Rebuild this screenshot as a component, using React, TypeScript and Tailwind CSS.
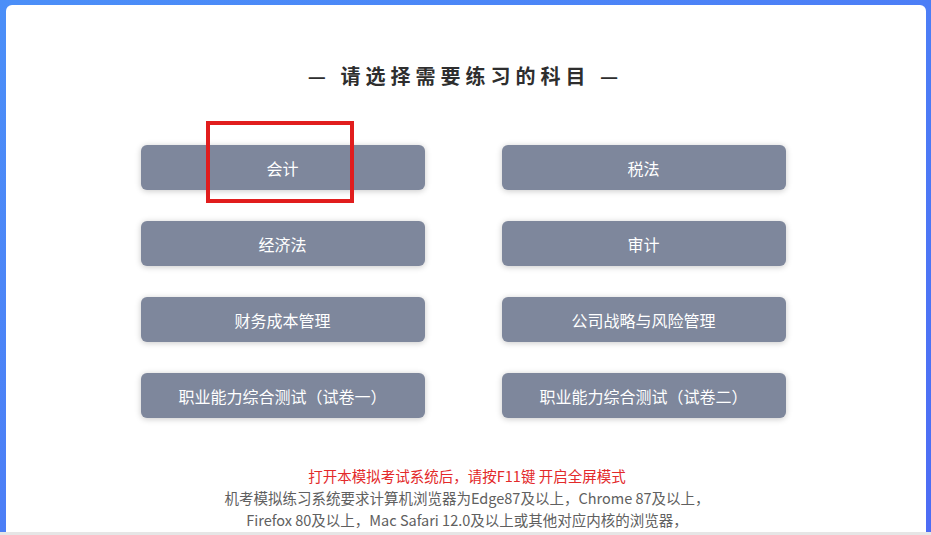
const subjects = [
  "会计",
  "税法",
  "经济法",
  "审计",
  "财务成本管理",
  "公司战略与风险管理",
  "职业能力综合测试（试卷一）",
  "职业能力综合测试（试卷二）",
];

const cjk = { fontFamily: '"Noto Sans CJK SC", "Noto Sans", sans-serif' };

function SubjectButton({ label, marked }: { label: string; marked?: boolean }) {
  return (
    <div className="relative">
      <button className="flex h-[45px] w-full items-center justify-center rounded-[6px] bg-[#7e879c] text-[16px] text-white shadow-[0_1px_6px_rgba(0,0,0,0.22)]">
        {label}
      </button>
      {marked && (
        <div className="pointer-events-none absolute left-[65px] top-[-24px] h-[82px] w-[148px] border-[4px] border-[#e11d1d]" />
      )}
    </div>
  );
}

export default function App() {
  return (
    <div
      className="flex h-[535px] w-full flex-col bg-gradient-to-br from-[#4b8ff8] to-[#4d6cf4]"
      style={cjk}
    >
      <div className="ml-[6px] mr-[5px] mt-[5px] flex flex-1 flex-col items-center rounded-t-[6px] bg-white pr-[6px] pt-[59px]">
        <h1 className="pl-[5px] text-[20px] font-bold leading-[24px] tracking-[5px] text-[#2e2e2e]">
          — 请选择需要练习的科目 —
        </h1>

        <div className="mt-[57px] grid grid-cols-[284px_284px] gap-x-[77px] gap-y-[31px]">
          {subjects.map((s, i) => (
            <SubjectButton key={s} label={s} marked={i === 0} />
          ))}
        </div>

        <div className="mt-[47px] pl-[8px] text-center text-[14.5px] leading-[22px]">
          <p className="text-[#e32a2a]">打开本模拟考试系统后，请按F11键 开启全屏模式</p>
          <p className="text-[#606060]">
            机考模拟练习系统要求计算机浏览器为Edge87及以上，Chrome 87及以上，
          </p>
          <p className="text-[#606060]">
            Firefox 80及以上，Mac Safari 12.0及以上或其他对应内核的浏览器，
          </p>
        </div>
      </div>
      <div className="h-[3px] bg-[#e6e6e6]" />
    </div>
  );
}
